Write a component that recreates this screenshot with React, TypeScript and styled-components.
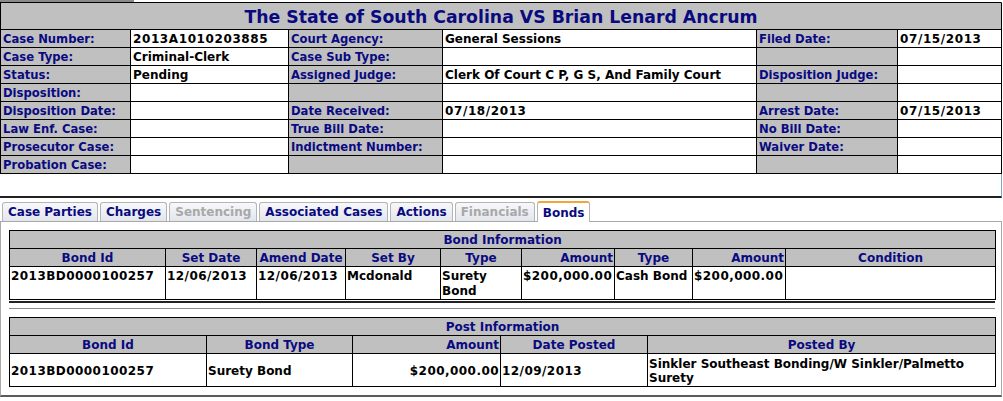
import React from "react";
import styled, { createGlobalStyle } from "styled-components";

const Global = createGlobalStyle`
  html, body { margin: 0; padding: 0; background: #fff; }
  body {
    font-family: "DejaVu Sans", Verdana, sans-serif;
    font-size: 11px;
    font-weight: bold;
    color: #000;
  }
`;

const Page = styled.div`
  width: 1003px;
  display: flex;
  flex-direction: column;
`;

const TopStrip = styled.div`
  display: flex;
  height: 2px;
`;

const TopTabEdge = styled.div`
  width: 134px;
  background: #8a8a8a;
`;

const CaseBox = styled.div`
  width: 1001px;
  height: 193px;
  border-top: 1px solid #000;
  border-right: 1px solid #7fa6c8;
  border-bottom: 2px solid #222;
  box-sizing: content-box;
`;

const Grid = styled.table<{ $w: number }>`
  border-collapse: collapse;
  table-layout: fixed;
  width: ${(p) => p.$w}px;
`;

const TitleCell = styled.td`
  background: #c0c0c0;
  color: #0a0a80;
  text-align: center;
  font-size: 17.3px;
  height: 25px;
  padding: 1px 0 0 0;
  border: 1px solid #000;
  border-top: none;
`;

const Label = styled.td`
  background: #c0c0c0;
  color: #0a0a80;
  border: 1px solid #000;
  height: 17px;
  padding: 0 2px;
  font-size: 11.6px;
  white-space: nowrap;
  overflow: hidden;
  vertical-align: middle;
`;

const Value = styled.td<{ $num?: boolean }>`
  background: #fff;
  color: #000;
  border: 1px solid #000;
  height: 17px;
  padding: 0 2px;
  font-size: 12px;
  letter-spacing: ${(p) => (p.$num ? "0.6px" : "0")};
  white-space: nowrap;
  overflow: hidden;
  vertical-align: middle;
`;

const Tabs = styled.div`
  display: flex;
  gap: 2px;
  padding: 3px 0 0 2px;
  height: 20px;
  align-items: flex-end;
`;

const Tab = styled.div<{ $active?: boolean; $disabled?: boolean }>`
  height: ${(p) => (p.$active ? "21px" : "19px")};
  box-sizing: border-box;
  padding: 0 5px;
  display: flex;
  align-items: center;
  font-size: 12px;
  color: ${(p) => (p.$disabled ? "#a8a8a8" : "#0a0a80")};
  background: ${(p) =>
    p.$active ? "#fff" : "linear-gradient(#f7f8fa, #e2e6ec)"};
  border: 1px solid #b4b4b4;
  border-top: ${(p) => (p.$active ? "2px solid #f2a53a" : "1px solid #b4b4b4")};
  border-bottom: none;
  border-radius: 3px 3px 0 0;
  margin-bottom: ${(p) => (p.$active ? "-1px" : "0")};
  position: relative;
`;

const Panel = styled.div`
  width: 1002px;
  box-sizing: border-box;
  border: 1px solid #a8a8a8;
  border-bottom: 2px solid #5a5a5a;
  padding: 8px 5px 8px 8px;
  display: flex;
  flex-direction: column;
`;

const SubTitle = styled.td`
  background: #c0c0c0;
  color: #0a0a80;
  text-align: center;
  border: 1px solid #000;
  height: 17px;
  padding: 0;
  font-size: 12px;
`;

const Head = styled.td<{ $right?: boolean }>`
  background: #c0c0c0;
  color: #0a0a80;
  text-align: ${(p) => (p.$right ? "right" : "center")};
  border: 1px solid #000;
  height: 17px;
  padding: 0 1px;
  font-size: 12px;
  white-space: nowrap;
  overflow: hidden;
`;

const Data = styled.td<{ $right?: boolean; $num?: boolean; $mid?: boolean }>`
  background: #fff;
  color: #000;
  text-align: ${(p) => (p.$right ? "right" : "left")};
  border: 1px solid #000;
  height: 30px;
  padding: 2px 1px 0 1px;
  vertical-align: ${(p) => (p.$mid ? "middle" : "top")};
  font-size: 12px;
  line-height: ${(p) => (p.$mid ? "14px" : "15px")};
  letter-spacing: ${(p) => (p.$num ? "0.45px" : "0")};
  white-space: ${(p) => (p.$num ? "nowrap" : "normal")};
`;

const Divider = styled.div`
  margin: 1px 0 0 0;
  border-top: 2px solid #222;
  height: 5px;
  border-bottom: 1px solid #8a8a8a;
  margin-bottom: 8px;
  width: 986px;
`;

const isNum = (s: string) => /^[\d/$.,A-Z]+$/.test(s) && /\d/.test(s);

const rows: [string, string, string, string, string, string][] = [
  ["Case Number:", "2013A1010203885", "Court Agency:", "General Sessions", "Filed Date:", "07/15/2013"],
  ["Case Type:", "Criminal-Clerk", "Case Sub Type:", "", "", ""],
  ["Status:", "Pending", "Assigned Judge:", "Clerk Of Court C P, G S, And Family Court", "Disposition Judge:", ""],
  ["Disposition:", "", "", "", "", ""],
  ["Disposition Date:", "", "Date Received:", "07/18/2013", "Arrest Date:", "07/15/2013"],
  ["Law Enf. Case:", "", "True Bill Date:", "", "No Bill Date:", ""],
  ["Prosecutor Case:", "", "Indictment Number:", "", "Waiver Date:", ""],
  ["Probation Case:", "", "", "", "", ""],
];

const caseCols = [130, 158, 154, 314, 141, 104];
const bondCols = [156, 91, 89, 95, 81, 93, 78, 93, 210];
const postCols = [197, 146, 148, 147, 348];

const bondRow = [
  "2013BD0000100257",
  "12/06/2013",
  "12/06/2013",
  "Mcdonald",
  "Surety Bond",
  "$200,000.00",
  "Cash Bond",
  "$200,000.00",
  "",
];

const tabs = [
  { name: "Case Parties" },
  { name: "Charges" },
  { name: "Sentencing", disabled: true },
  { name: "Associated Cases" },
  { name: "Actions" },
  { name: "Financials", disabled: true },
  { name: "Bonds", active: true },
];

export default function App() {
  return (
    <Page>
      <Global />
      <TopStrip>
        <TopTabEdge />
      </TopStrip>
      <CaseBox>
        <Grid $w={1001}>
          <colgroup>
            {caseCols.map((w, i) => (
              <col key={i} style={{ width: w }} />
            ))}
          </colgroup>
          <tbody>
            <tr>
              <TitleCell colSpan={6}>
                The State of South Carolina VS Brian Lenard Ancrum
              </TitleCell>
            </tr>
            {rows.map((r, i) => (
              <tr key={i}>
                <Label>{r[0]}</Label>
                <Value $num={isNum(r[1])}>{r[1]}</Value>
                <Label>{r[2]}</Label>
                <Value $num={isNum(r[3])}>{r[3]}</Value>
                <Label>{r[4]}</Label>
                <Value $num={isNum(r[5])}>{r[5]}</Value>
              </tr>
            ))}
          </tbody>
        </Grid>
      </CaseBox>
      <Tabs>
        {tabs.map((t) => (
          <Tab key={t.name} $active={t.active} $disabled={t.disabled}>
            {t.name}
          </Tab>
        ))}
      </Tabs>
      <Panel>
        <Grid $w={986}>
          <colgroup>
            {bondCols.map((w, i) => (
              <col key={i} style={{ width: w }} />
            ))}
          </colgroup>
          <tbody>
            <tr>
              <SubTitle colSpan={9}>Bond Information</SubTitle>
            </tr>
            <tr>
              <Head>Bond Id</Head>
              <Head>Set Date</Head>
              <Head>Amend Date</Head>
              <Head>Set By</Head>
              <Head>Type</Head>
              <Head $right>Amount</Head>
              <Head>Type</Head>
              <Head $right>Amount</Head>
              <Head>Condition</Head>
            </tr>
            <tr>
              {bondRow.map((v, i) => (
                <Data key={i} $num={isNum(v)}>
                  {v}
                </Data>
              ))}
            </tr>
          </tbody>
        </Grid>
        <Divider />
        <Grid $w={986}>
          <colgroup>
            {postCols.map((w, i) => (
              <col key={i} style={{ width: w }} />
            ))}
          </colgroup>
          <tbody>
            <tr>
              <SubTitle colSpan={5}>Post Information</SubTitle>
            </tr>
            <tr>
              <Head>Bond Id</Head>
              <Head>Bond Type</Head>
              <Head $right>Amount</Head>
              <Head>Date Posted</Head>
              <Head>Posted By</Head>
            </tr>
            <tr>
              <Data $mid $num>2013BD0000100257</Data>
              <Data $mid>Surety Bond</Data>
              <Data $mid $right $num>$200,000.00</Data>
              <Data $mid $num>12/09/2013</Data>
              <Data $mid>Sinkler Southeast Bonding/W Sinkler/Palmetto Surety</Data>
            </tr>
          </tbody>
        </Grid>
      </Panel>
    </Page>
  );
}
